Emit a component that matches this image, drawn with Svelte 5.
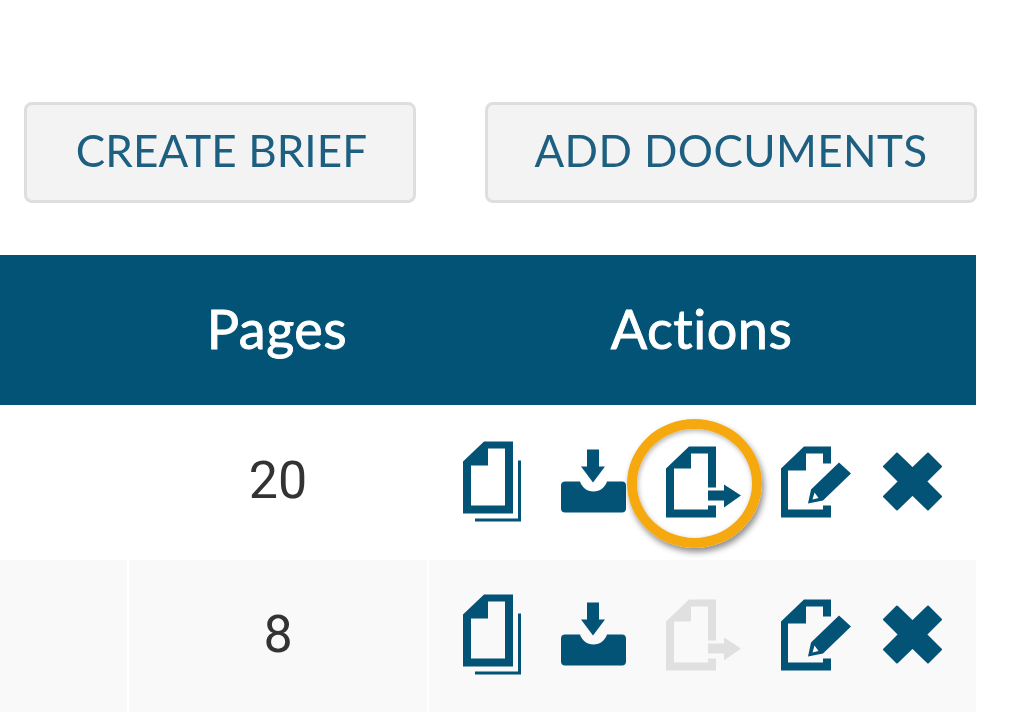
<script>
  const rows = [
    { pages: 20, canSend: true, highlight: true },
    { pages: 8, canSend: false, highlight: false }
  ];
</script>

{#snippet copyIcon()}
  <svg class="icon" width="58" height="90" viewBox="463 437.5 58 90" aria-hidden="true">
    <path fill-rule="evenodd" d="M484 441H513V513H463V461ZM488 448V465H471V505H505V448Z" />
    <path d="M518 460H521V521H475V518H518Z" />
  </svg>
{/snippet}

{#snippet downloadIcon()}
  <svg class="icon" width="65" height="90" viewBox="562 437.5 65 90" aria-hidden="true">
    <path d="M588 449H600V466H606L594 482L582 466H588Z" />
    <path d="M566 481H581C583 487 588 491 594.500 491C601 491 606 487 608 481H623C625.500 481 627 482.500 627 485V508C627 510.500 625.500 512 623 512H566C563.500 512 562 510.500 562 508V485C562 482.500 563.500 481 566 481Z" />
  </svg>
{/snippet}

{#snippet sendIcon()}
  <svg class="icon" width="75" height="90" viewBox="667 437.5 75 90" aria-hidden="true">
    <path d="M690 446H717V487H709V453H692V468H675V509H709V505H717V517H667V468Z" />
    <path d="M709 490H725V484L742 495L725 507V500H709Z" />
  </svg>
{/snippet}

{#snippet editIcon()}
  <svg class="icon" width="70" height="90" viewBox="782 437.500 70 90" aria-hidden="true">
    <path d="M805 446H832V463H824V453H807V470H789V509H824V505H832V517H782V468Z" />
    <path fill-rule="evenodd" d="M809 503L812 489L840 462L852 473L824 500ZM813.500 499L819.500 497.500L815.500 492Z" />
  </svg>
{/snippet}

{#snippet removeIcon()}
  <svg class="icon" width="59" height="90" viewBox="884 437.500 59 90" aria-hidden="true">
    <path stroke="currentColor" stroke-width="2" stroke-linejoin="round" d="M898 453L913.500 468L929 453L942 466L927 481L942 496L929 509L913.500 494L898 509L885 496L900 481L885 466Z" />
  </svg>
{/snippet}

<main>
  <div class="toolbar">
    <button class="brief">CREATE BRIEF</button>
    <button class="docs">ADD DOCUMENTS</button>
  </div>

  <div class="table">
    <div class="row head">
      <div></div>
      <div class="cell">Pages</div>
      <div class="cell">Actions</div>
    </div>

    {#each rows as row}
      <div class="row body">
        <div></div>
        <div class="cell number">{row.pages}</div>
        <div class="cell actions">
          {@render copyIcon()}
          {@render downloadIcon()}
          <span class="send" class:disabled={!row.canSend}>
            {@render sendIcon()}
            {#if row.highlight}
              <span class="ring"></span>
            {/if}
          </span>
          <span class="edit">{@render editIcon()}</span>
          {@render removeIcon()}
        </div>
      </div>
    {/each}
  </div>
</main>

<style>
  :global(body) {
    margin: 0;
    background: #fff;
  }

  main {
    height: 725px;
    padding-top: 102px;
    box-sizing: border-box;
    overflow: hidden;
    filter: blur(0.6px);
  }

  .toolbar {
    display: flex;
    gap: 69px;
    padding-left: 24px;
    margin-bottom: 52px;
  }

  button {
    height: 101px;
    box-sizing: border-box;
    background: #f3f3f3;
    border: 3px solid #dedede;
    border-radius: 8px;
    color: #1d5f80;
    font-family: Lato, sans-serif;
    font-size: 44px;
    letter-spacing: 0.4px;
    padding: 0 0 5px;
  }

  .brief {
    width: 392px;
    letter-spacing: 0.1px;
    padding-left: 3px;
  }

  .docs {
    width: 492px;
  }

  .table {
    width: 976px;
  }

  .row {
    display: grid;
    grid-template-columns: 127px 300px 1fr;
  }

  .head {
    height: 150px;
    background: #035377;
    color: #fff;
    font-family: Lato, sans-serif;
    font-size: 54px;
    letter-spacing: 0.5px;
    font-variant-ligatures: none;
    -webkit-text-stroke: 0.9px #fff;
  }

  .head .cell {
    padding-bottom: 4px;
  }

  .body {
    height: 155px;
    font-family: Roboto, sans-serif;
    font-size: 52px;
    color: #333;
  }

  .body:nth-child(odd) {
    height: 152px;
    background: #f9f9f9;
  }

  .cell {
    display: flex;
    align-items: center;
    justify-content: center;
  }

  .body .cell {
    border-left: 2px solid #fff;
  }

  .number {
    padding-bottom: 4px;
  }

  .actions {
    justify-content: flex-start;
    gap: 40px;
    padding-left: 34px;
    color: #035377;
  }

  .icon {
    display: block;
    flex: none;
    fill: currentColor;
  }

  .send {
    position: relative;
  }

  .send.disabled {
    color: #e0e0e0;
  }

  .edit {
    margin-right: -8px;
  }

  .ring {
    position: absolute;
    left: -39px;
    top: -19px;
    width: 135px;
    height: 129px;
    box-sizing: border-box;
    border: 10px solid #f5a90f;
    border-radius: 50%;
    box-shadow: 2px 4px 6px rgba(0, 0, 0, 0.45), inset 1px 2px 5px rgba(0, 0, 0, 0.3);
  }
</style>
